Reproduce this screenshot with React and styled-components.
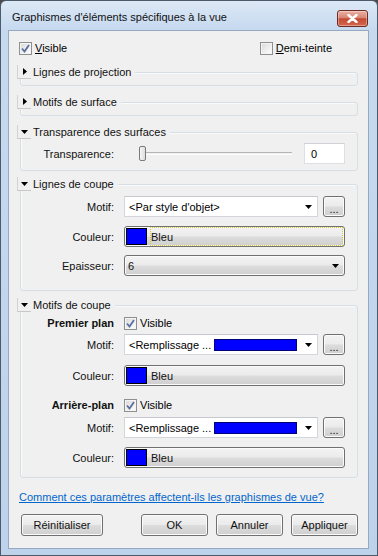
import styled, { createGlobalStyle } from "styled-components";

const GlobalStyle = createGlobalStyle`
  body {
    margin: 0;
    background: #4a4a4a;
  }
`;

const Window = styled.div`
  width: 378px;
  height: 556px;
  box-sizing: border-box;
  border: 1px solid #4e5a6a;
  border-radius: 6px 6px 0 0;
  background: linear-gradient(180deg, #dce8f6 0, #c6d9ef 29px, #bdd3eb 100%);
  display: flex;
  flex-direction: column;
  font-family: "Liberation Sans", Arial, sans-serif;
  font-size: 11px;
  color: #000;
`;

const TitleBar = styled.div`
  height: 29px;
  display: flex;
  align-items: flex-start;
  justify-content: space-between;
  padding: 0 9px 0 11px;
`;

const Title = styled.div`
  margin-top: 9px;
  font-size: 11px;
  line-height: 15px;
  color: #111;
`;

const CloseButton = styled.div`
  margin-top: 9px;
  width: 31px;
  height: 17px;
  box-sizing: border-box;
  border: 1px solid #6e2a22;
  border-radius: 3px;
  background: linear-gradient(180deg, #eab1a3 0%, #d98673 45%, #c24a33 52%, #d5674e 100%);
  box-shadow: inset 0 0 0 1px rgba(255, 255, 255, 0.35);
  display: flex;
  align-items: center;
  justify-content: center;
`;

const Frame = styled.div`
  flex: 1;
  display: flex;
  padding: 0 8px 6px 7px;
`;

const Content = styled.div`
  flex: 1;
  background: #f0f0f0;
  border: 1px solid #97a9c0;
  padding: 11px 10px 0 8px;
  display: flex;
  flex-direction: column;
`;

const TopRow = styled.div`
  display: flex;
  align-items: center;
  height: 13px;
  padding-left: 2px;
`;

const CheckLabel = styled.label`
  display: flex;
  align-items: center;
  gap: 3px;
  line-height: 13px;
  margin-left: ${(p) => (p.$right ? "auto" : "0")};
  margin-right: ${(p) => (p.$right ? "26px" : "0")};
`;

const Box13 = styled.span`
  width: 13px;
  height: 13px;
  box-sizing: border-box;
  border: 1px solid #8e8f8f;
  background: linear-gradient(135deg, #d8d8d8 0%, #f4f4f4 70%, #ffffff 100%);
  box-shadow: inset 0 0 0 1px #f4f4f4;
  display: flex;
  align-items: center;
  justify-content: center;
`;

const Section = styled.div`
  margin-top: ${(p) => p.$mt}px;
  display: flex;
  flex-direction: column;
`;

const Header = styled.div`
  position: relative;
  z-index: 1;
  align-self: flex-start;
  display: flex;
  align-items: center;
  height: 14px;
`;

const Tab = styled.span`
  width: 14px;
  height: 14px;
  box-sizing: border-box;
  border-left: 1px solid #d2d2d2;
  border-bottom: 1px solid #c8c8c8;
  background: #f0f0f0;
  display: flex;
  align-items: center;
  justify-content: center;
`;

const HeaderText = styled.span`
  background: #f0f0f0;
  padding: 0 4px 0 2px;
  line-height: 14px;
  color: #111;
`;

const GroupBox = styled.div`
  margin-left: 3px;
  margin-top: -7px;
  min-height: 14px;
  box-sizing: border-box;
  border: 1px solid #d5dfe5;
  border-radius: 3px;
  box-shadow: inset 1px 1px 0 #fafafa;
  padding: ${(p) => p.$pad || "0"};
  display: flex;
  flex-direction: column;
`;

const Row = styled.div`
  display: flex;
  align-items: center;
  height: ${(p) => p.$h || 21}px;
  margin-top: ${(p) => p.$mt || 0}px;
  padding-right: 12px;
`;

const Label = styled.span`
  width: 93px;
  margin-right: 10px;
  text-align: right;
  font-weight: ${(p) => (p.$bold ? "bold" : "normal")};
  color: #111;
  flex-shrink: 0;
`;

const Control = styled.div`
  flex: 1;
  display: flex;
  align-items: center;
  height: 100%;
`;

const Slider = styled.div`
  flex: 1;
  margin: 0 12px 0 15px;
  height: 15px;
  position: relative;
  display: flex;
  align-items: center;
`;

const Track = styled.div`
  flex: 1;
  height: 1px;
  border-top: 1px solid #b6b6b6;
  border-bottom: 1px solid #fdfdfd;
`;

const Thumb = styled.span`
  position: absolute;
  left: 0;
  top: 0;
  width: 7px;
  height: 15px;
  box-sizing: border-box;
  border: 1px solid #7a7a7a;
  border-radius: 2px;
  background: linear-gradient(90deg, #f6f6f6, #dedede);
`;

const TextBox = styled.div`
  width: 41px;
  height: 21px;
  box-sizing: border-box;
  border: 1px solid #dcdfe3;
  border-top-color: #cfd3d8;
  background: #fff;
  padding-left: 6px;
  display: flex;
  align-items: center;
`;

const Combo = styled.div`
  flex: 1;
  height: 21px;
  box-sizing: border-box;
  border: 1px solid #d3d6da;
  border-top-color: #c5c9ce;
  background: #fff;
  display: flex;
  align-items: center;
  padding: 0 5px 0 4px;
  gap: 3px;
`;

const Swatch = styled.span`
  width: ${(p) => p.$w}px;
  height: ${(p) => p.$h}px;
  box-sizing: border-box;
  background: #0000ff;
  border: 1px solid ${(p) => p.$border};
  flex-shrink: 0;
`;

const Arrow = styled.span`
  margin-left: auto;
  display: flex;
`;

const WinButton = styled.div`
  box-sizing: border-box;
  height: ${(p) => p.$h || 21}px;
  width: ${(p) => (p.$w ? `${p.$w}px` : "auto")};
  flex: ${(p) => (p.$grow ? 1 : "none")};
  border: 1px solid #707070;
  border-radius: 3px;
  background: linear-gradient(180deg, #f3f3f3 0%, #ebebeb 48%, #dcdcdc 52%, #cfcfcf 100%);
  box-shadow: inset 0 0 0 1px #fbfbfb;
  display: flex;
  align-items: center;
  justify-content: ${(p) => p.$align || "center"};
  color: #111;
`;

const Dots = styled(WinButton)`
  margin-left: 5px;
  align-items: flex-end;
  padding-bottom: 3px;
  line-height: 8px;
`;

const ColorText = styled.span`
  flex: 1;
  align-self: stretch;
  margin: 0 1px 0 3px;
  display: flex;
  align-items: center;
  border: 1px dotted ${(p) => (p.$focus ? "#d6cc3a" : "transparent")};
`;

const DropText = styled.span`
  padding-left: 3px;
`;

const HelpLink = styled.a`
  margin: 12px 0 0 2px;
  line-height: 14px;
  color: #0066cc;
  text-decoration: underline;
  cursor: pointer;
`;

const ButtonBar = styled.div`
  margin-top: 10px;
  display: flex;
  gap: 8px;
  padding-left: 4px;
`;

const Spacer = styled.span`
  flex: 1;
`;

const Check = () => (
  <svg width="9" height="9" viewBox="0 0 9 9">
    <path d="M1 4.5 L3.5 7.5 L8 1" fill="none" stroke="#5b6f9e" strokeWidth="1.8" />
  </svg>
);

const Checkbox = ({ checked }) => <Box13>{checked && <Check />}</Box13>;

const DownArrow = () => (
  <svg width="7" height="4" viewBox="0 0 7 4">
    <path d="M0 0 H7 L3.5 4 Z" fill="#000" />
  </svg>
);

const RightArrow = () => (
  <svg width="4" height="7" viewBox="0 0 4 7">
    <path d="M0 0 V7 L4 3.5 Z" fill="#000" />
  </svg>
);

const Group = ({ title, open, mt, pad, children }) => (
  <Section $mt={mt}>
    <Header>
      <Tab>{open ? <DownArrow /> : <RightArrow />}</Tab>
      <HeaderText>{title}</HeaderText>
    </Header>
    <GroupBox $pad={pad}>{children}</GroupBox>
  </Section>
);

const ColorButton = ({ focus }) => (
  <WinButton $grow $align="flex-start">
    <Swatch $w={21} $h={17} $border="#000" style={{ marginLeft: 1 }} />
    <ColorText $focus={focus}>Bleu</ColorText>
  </WinButton>
);

const PatternCombo = ({ text, fill }) => (
  <Control>
    <Combo>
      <span>{text}</span>
      {fill && <Swatch $w={83} $h={12} $border="#00007a" />}
      <Arrow>
        <DownArrow />
      </Arrow>
    </Combo>
    <Dots $w={22}>...</Dots>
  </Control>
);

export default function App() {
  return (
    <>
      <GlobalStyle />
      <Window>
        <TitleBar>
          <Title>Graphismes d'éléments spécifiques à la vue</Title>
          <CloseButton>
            <svg width="11" height="9" viewBox="0 0 11 9">
              <path d="M1.5 1 L9.5 8 M9.5 1 L1.5 8" stroke="#fff" strokeWidth="2.4" strokeLinecap="round" />
            </svg>
          </CloseButton>
        </TitleBar>
        <Frame>
          <Content>
            <TopRow>
              <CheckLabel>
                <Checkbox checked />
                <span>
                  <u>V</u>isible
                </span>
              </CheckLabel>
              <CheckLabel $right>
                <Checkbox />
                <span>
                  <u>D</u>emi-teinte
                </span>
              </CheckLabel>
            </TopRow>

            <Group title="Lignes de projection" mt={10} />
            <Group title="Motifs de surface" mt={9} />

            <Group title="Transparence des surfaces" open mt={9} pad="10px 0 6px 0">
              <Row>
                <Label>Transparence:</Label>
                <Control>
                  <Slider>
                    <Track />
                    <Thumb />
                  </Slider>
                  <TextBox>0</TextBox>
                </Control>
              </Row>
            </Group>

            <Group title="Lignes de coupe" open mt={6} pad="11px 0 14px 0">
              <Row>
                <Label>Motif:</Label>
                <PatternCombo text="<Par style d'objet>" />
              </Row>
              <Row $mt={9}>
                <Label>Couleur:</Label>
                <Control>
                  <ColorButton focus />
                </Control>
              </Row>
              <Row $mt={8}>
                <Label>Epaisseur:</Label>
                <Control>
                  <WinButton $grow $align="flex-start">
                    <DropText>6</DropText>
                    <Arrow style={{ marginRight: 5 }}>
                      <DownArrow />
                    </Arrow>
                  </WinButton>
                </Control>
              </Row>
            </Group>

            <Group title="Motifs de coupe" open mt={7} pad="9px 0 9px 0">
              <Row $h={16}>
                <Label $bold>Premier plan</Label>
                <Control>
                  <CheckLabel>
                    <Checkbox checked />
                    <span>Visible</span>
                  </CheckLabel>
                </Control>
              </Row>
              <Row $mt={3}>
                <Label>Motif:</Label>
                <PatternCombo text="<Remplissage ..." fill />
              </Row>
              <Row $mt={10}>
                <Label>Couleur:</Label>
                <Control>
                  <ColorButton />
                </Control>
              </Row>
              <Row $h={16} $mt={11}>
                <Label $bold>Arrière-plan</Label>
                <Control>
                  <CheckLabel>
                    <Checkbox checked />
                    <span>Visible</span>
                  </CheckLabel>
                </Control>
              </Row>
              <Row $mt={4}>
                <Label>Motif:</Label>
                <PatternCombo text="<Remplissage ..." fill />
              </Row>
              <Row $mt={9}>
                <Label>Couleur:</Label>
                <Control>
                  <ColorButton />
                </Control>
              </Row>
            </Group>

            <HelpLink>Comment ces paramètres affectent-ils les graphismes de vue?</HelpLink>

            <ButtonBar>
              <WinButton $w={82} $h={22}>Réinitialiser</WinButton>
              <Spacer />
              <WinButton $w={67} $h={22}>OK</WinButton>
              <WinButton $w={67} $h={22}>Annuler</WinButton>
              <WinButton $w={67} $h={22}>Appliquer</WinButton>
            </ButtonBar>
          </Content>
        </Frame>
      </Window>
    </>
  );
}
